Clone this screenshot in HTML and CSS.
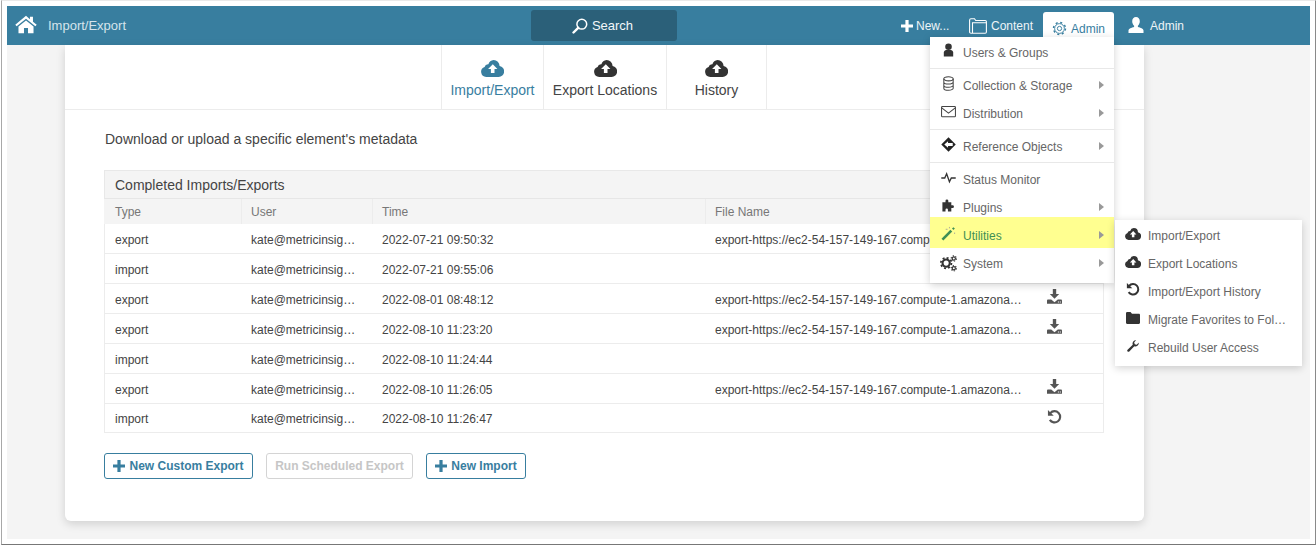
FILE: index.html
```html
<!DOCTYPE html>
<html lang="en">
<head>
<meta charset="utf-8">
<title>Import/Export</title>
<link rel="stylesheet" href="styles.css">
</head>
<body>
<svg class="defs" width="0" height="0" aria-hidden="true">
  <defs>
    <symbol id="cloud" viewBox="0 0 23 17">
      <path fill="currentColor" d="M5.2 17A5.2 5.2 0 0 1 3.6 6.9 3.6 3.6 0 0 1 7.4 4.2 6 6 0 0 1 12.6 0a6 6 0 0 1 6 5.900A5.600 5.600 0 0 1 17.600 17z"/>
      <path fill="#fff" d="M11.800 4.200l4.600 4.900h-2.900V13H9.900v-3.900H7.100z"/>
    </symbol>
    <symbol id="download" viewBox="0 0 16 16">
      <path fill="currentColor" d="M6.200 0h3.600v5.400H13L8 10.400 3 5.400h3.200z"/>
      <path fill="currentColor" fill-rule="evenodd" d="M0 15.800V12.400c0-.7.5-1.200 1.200-1.200H4.500L8 14l3.500-2.800h3.300c.7 0 1.200.5 1.200 1.200v3.400zM11.600 13.200v1.200h1.200v-1.200zM13.600 13.200v1.200h1.200v-1.200z"/>
    </symbol>
    <symbol id="undo" viewBox="0 0 16 16">
      <path fill="none" stroke="currentColor" stroke-width="2.300" d="M3.500 4.400A6 6 0 1 1 3 11.600"/>
      <path fill="currentColor" d="M1 1l6.200 6.200H1z"/>
    </symbol>
    <symbol id="plus" viewBox="0 0 12 12">
      <path fill="currentColor" d="M4.400 0h3.200v4.400H12v3.200H7.600V12H4.400V7.600H0V4.400h4.400z"/>
    </symbol>
  </defs>
</svg>
<div class="frame">
  <div class="app">
    <header class="nav">
      <div class="nav-left">
        <svg class="i-home" viewBox="0 0 24 20"><path fill="#fff" d="M12 .5L.3 10.300l1.500 1.700L12 3.700 22.200 12l1.500-1.700L19.600 7V1.500h-3.300v2.700z"/><path fill="#fff" d="M12 5.600L3.800 12.300V19.500h6V13.900h4.400V19.500h6V12.300z"/></svg>
        <span class="nav-title">Import/Export</span>
      </div>
      <button class="search" type="button">
        <svg class="i-search" viewBox="0 0 16 16"><circle cx="9.800" cy="6.200" r="4.900" fill="none" stroke="#fff" stroke-width="1.500"/><path d="M6.200 9.800L1.500 14.500" stroke="#fff" stroke-width="2.400" stroke-linecap="round"/></svg>
        <span>Search</span>
      </button>
      <nav class="nav-right">
        <a class="nav-item new"><svg class="i-plus"><use href="#plus"/></svg>New...</a>
        <a class="nav-item content"><svg class="i-folder-o" viewBox="0 0 18 16"><path fill="none" stroke="#fff" stroke-width="1.100" d="M.6 14V2.200C.6 1.300 1.200.8 2 .8h3.500l1.200 1.700h9.500c.7 0 1.200.5 1.200 1.200V14c0 .7-.5 1.200-1.200 1.200H2c-.8 0-1.400-.5-1.400-1.200zM3.500 15V4.800h14"/></svg>Content</a>
        <a class="nav-item admin-tab"><svg class="i-gear" viewBox="0 0 16 16"><circle cx="8" cy="8" r="5.200" fill="none" stroke="currentColor" stroke-width="1"/><circle cx="8" cy="8" r="6.400" fill="none" stroke="currentColor" stroke-width="1.500" stroke-dasharray="2.200 2.830"/><circle cx="8" cy="8" r="2.300" fill="none" stroke="currentColor" stroke-width="1"/></svg>Admin</a>
        <a class="nav-item user"><svg class="i-user" viewBox="0 0 16 16"><path fill="#fff" d="M8 0c2.300 0 3.800 1.800 3.800 4.200 0 1.900-.9 3.600-1.900 4.500v1.200c2.500.8 5.600 1.500 5.600 3.700V16H.5v-2.400c0-2.200 3.100-2.900 5.600-3.700V8.700C5.100 7.800 4.200 6.100 4.200 4.200 4.200 1.800 5.700 0 8 0z"/></svg>Admin</a>
      </nav>
    </header>

    <main class="card">
      <div class="tabs">
        <a class="tab tab-active"><svg class="i-cloud-lg"><use href="#cloud"/></svg><span>Import/Export</span></a>
        <a class="tab tab-locations"><svg class="i-cloud-lg"><use href="#cloud"/></svg><span>Export Locations</span></a>
        <a class="tab tab-history"><svg class="i-cloud-lg"><use href="#cloud"/></svg><span>History</span></a>
      </div>
      <div class="body">
        <p class="lead">Download or upload a specific element's metadata</p>
        <section class="panel">
          <h2 class="panel-title">Completed Imports/Exports</h2>
          <table class="grid">
            <thead>
              <tr><th class="c-type">Type</th><th class="c-user">User</th><th class="c-time">Time</th><th class="c-file">File Name</th><th class="c-act"></th></tr>
            </thead>
            <tbody>
              <tr><td>export</td><td>kate@metricinsights.com</td><td>2022-07-21 09:50:32</td><td>export-https://ec2-54-157-149-167.compute-1.amazonaws.com-2022.xml</td><td class="act"><svg class="i-act"><use href="#download"/></svg></td></tr>
              <tr><td>import</td><td>kate@metricinsights.com</td><td>2022-07-21 09:55:06</td><td></td><td class="act"></td></tr>
              <tr><td>export</td><td>kate@metricinsights.com</td><td>2022-08-01 08:48:12</td><td>export-https://ec2-54-157-149-167.compute-1.amazonaws.com-2022.xml</td><td class="act"><svg class="i-act"><use href="#download"/></svg></td></tr>
              <tr><td>export</td><td>kate@metricinsights.com</td><td>2022-08-10 11:23:20</td><td>export-https://ec2-54-157-149-167.compute-1.amazonaws.com-2022.xml</td><td class="act"><svg class="i-act"><use href="#download"/></svg></td></tr>
              <tr><td>import</td><td>kate@metricinsights.com</td><td>2022-08-10 11:24:44</td><td></td><td class="act"></td></tr>
              <tr><td>export</td><td>kate@metricinsights.com</td><td>2022-08-10 11:26:05</td><td>export-https://ec2-54-157-149-167.compute-1.amazonaws.com-2022.xml</td><td class="act"><svg class="i-act"><use href="#download"/></svg></td></tr>
              <tr class="row-last"><td>import</td><td>kate@metricinsights.com</td><td>2022-08-10 11:26:47</td><td></td><td class="act"><svg class="i-act"><use href="#undo"/></svg></td></tr>
            </tbody>
          </table>
        </section>
        <div class="actions">
          <button class="btn btn-custom" type="button"><svg class="i-btn"><use href="#plus"/></svg>New Custom Export</button>
          <button class="btn btn-off" type="button">Run Scheduled Export</button>
          <button class="btn btn-import" type="button"><svg class="i-btn"><use href="#plus"/></svg>New Import</button>
        </div>
      </div>
    </main>

    <div class="menu">
      <a class="mi"><svg class="mi-ic" viewBox="0 0 16 16"><circle cx="8" cy="4" r="3.500" fill="#333"/><path fill="#333" d="M3 14.500V10c0-1.500 1.500-2.500 2.500-2.500h5c1 0 2.500 1 2.500 2.500v4.500z"/></svg>Users &amp; Groups</a>
      <div class="sep"></div>
      <a class="mi"><svg class="mi-ic" viewBox="0 0 16 16"><g fill="none" stroke="#444" stroke-width="1.100"><ellipse cx="8" cy="3" rx="5" ry="2.200"/><path d="M3 3v10c0 1.200 2.200 2.200 5 2.200s5-1 5-2.200V3M3 6.400c0 1.200 2.200 2.200 5 2.200s5-1 5-2.200M3 9.800c0 1.200 2.200 2.200 5 2.200s5-1 5-2.200"/></g></svg>Collection &amp; Storage<i class="caret"></i></a>
      <a class="mi"><svg class="mi-ic" viewBox="0 0 16 14"><g fill="none" stroke="#444" stroke-width="1.100"><rect x=".6" y="1.600" width="14.800" height="11" rx=".8"/><path d="M.8 3.200L8 8.800l7.200-5.600"/></g></svg>Distribution<i class="caret"></i></a>
      <div class="sep"></div>
      <a class="mi"><svg class="mi-ic" viewBox="0 0 16 16"><path fill="#222" d="M8 .3L15.700 8 8 15.700.3 8z"/><path fill="#fff" d="M8.500 4.500L12.500 8l-4 3.500V9.500H3.500v-3h5z" transform="matrix(-1 0 0 1 16 0)"/></svg>Reference Objects<i class="caret"></i></a>
      <div class="sep"></div>
      <a class="mi"><svg class="mi-ic" viewBox="0 0 16 16"><path fill="none" stroke="#333" stroke-width="1.400" d="M.3 8.500H4l2-4.500 3 8.500 2-4h4.700"/></svg>Status Monitor</a>
      <a class="mi"><svg class="mi-ic" viewBox="0 0 16 16"><path fill="#333" d="M1.500 4.500h3.300V3a1.500 1.500 0 0 1 3 0v1.500h3.200v3.200h1.300a1.500 1.500 0 0 1 0 3h-1.300v3.800H7.400v-2a1.300 1.300 0 0 0-2.600 0v2H1.500z"/></svg>Plugins<i class="caret"></i></a>
      <a class="mi mi-hl"><svg class="mi-ic" viewBox="0 0 16 16"><path d="M1.500 14.500L11 5" stroke="#3f8f55" stroke-width="2.800"/><path d="M12.500 3.500l1.500-1.500" stroke="#3f8f55" stroke-width="2.200"/><path d="M5 3.500h2M9 1v1.500M14.500 7v1.500" stroke="#aa9" stroke-width="1"/></svg>Utilities<i class="caret"></i></a>
      <a class="mi"><svg class="mi-ic mi-ic-gears" viewBox="0 0 16 16"><circle cx="5.800" cy="7.600" r="3.400" fill="none" stroke="#333" stroke-width="2"/><circle cx="5.800" cy="7.600" r="5" fill="none" stroke="#333" stroke-width="1.600" stroke-dasharray="1.900 2"/><circle cx="13" cy="3.300" r="1.500" fill="none" stroke="#333" stroke-width="1.100"/><circle cx="13" cy="3.300" r="2.500" fill="none" stroke="#333" stroke-width="1" stroke-dasharray="1.200 1.400"/><circle cx="13" cy="12.500" r="1.500" fill="none" stroke="#333" stroke-width="1.100"/><circle cx="13" cy="12.500" r="2.500" fill="none" stroke="#333" stroke-width="1" stroke-dasharray="1.200 1.400"/></svg>System<i class="caret"></i></a>
    </div>

    <div class="submenu">
      <a class="si"><svg class="si-ic"><use href="#cloud"/></svg>Import/Export</a>
      <a class="si"><svg class="si-ic"><use href="#cloud"/></svg>Export Locations</a>
      <a class="si"><svg class="si-ic si-undo"><use href="#undo"/></svg>Import/Export History</a>
      <a class="si"><svg class="si-ic" viewBox="0 0 14 12"><path fill="#333" d="M0 10.800V1.300C0 .6.500 0 1.200 0h3.300L6 1.800h6.800c.7 0 1.200.5 1.200 1.200v7.800c0 .7-.5 1.200-1.200 1.200H1.200C.5 12 0 11.500 0 10.800z"/></svg><span class="si-text">Migrate Favorites to Folders and Subfolders</span></a>
      <a class="si"><svg class="si-ic" viewBox="0 0 14 14"><path fill="#333" d="M13.800 3.300a4 4 0 0 1-5.300 3.900L2.700 13.300a1.300 1.300 0 0 1-2-2l6-5.800A4 4 0 0 1 10.700.2L8.400 2.600l.6 2.300 2.300.6 2.300-2.300z"/></svg>Rebuild User Access</a>
    </div>
  </div>
</div>
</body>
</html>
```

FILE: styles.css
```css
* { box-sizing: border-box; }
html, body { margin: 0; padding: 0; background: #fff; height: 547px; overflow: hidden; }
body { font-family: "Liberation Sans", Arial, sans-serif; font-size: 12px; color: #444; }
.defs { position: absolute; }
a { color: inherit; text-decoration: none; }

.frame {
  height: 545px;
  margin: 0 0 2px 1px;
  padding: 5px 5px 4px;
  border-top: 1px solid #e9e9e9;
  border-left: 1px solid #a8a8a8;
  border-right: 1px solid #8a8a8a;
  border-bottom: 1px solid #777;
}
.app { position: relative; height: 533px; background: #f4f4f4; overflow: hidden; }

/* top bar */
.nav { display: flex; align-items: center; height: 39px; background: #387e9f; color: #fff; }
.nav-left { display: flex; align-items: center; width: 524px; padding-left: 8px; }
.i-home { width: 22px; height: 19px; margin-top: -3px; }
.nav-title { margin-left: 11px; font-size: 13px; color: #d5e4ec; margin-top: -1px; }
.search {
  display: flex; align-items: center; justify-content: center; gap: 4px;
  width: 146px; height: 31px; padding: 0 3px 0 0;
  border: 0; border-radius: 3px; background: #2b6079; color: #f2f7fa;
  font: 13px "Liberation Sans", Arial, sans-serif;
}
.i-search { width: 16px; height: 16px; }
.nav-right { display: flex; align-items: flex-end; height: 39px; margin-left: 224px; font-size: 12px; }
.nav-item { display: flex; align-items: center; height: 39px; color: #edf4f7; }
.i-plus { width: 12px; height: 12px; margin-right: 3px; color: #fff; }
.new { width: 68px; }
.i-folder-o { width: 18px; height: 16px; margin-right: 4px; }
.content { width: 74px; }
.admin-tab {
  width: 71px; height: 33px; padding-left: 10px; margin-bottom: 0;
  background: #fff; color: #387e9f; border-radius: 3px 3px 0 0;
}
.i-gear { width: 15px; height: 15px; margin-right: 4px; margin-left: -1px; }
.user { margin-left: 14px; }
.i-user { width: 16px; height: 16px; margin-right: 6px; margin-top: -2px; }

/* card */
.card {
  width: 1079px; height: 476px; margin-left: 58px;
  background: #fff; border-radius: 0 0 6px 6px;
  box-shadow: 0 3px 10px rgba(0, 0, 0, .15);
}
.tabs { display: flex; height: 65px; padding-left: 376px; border-bottom: 1px solid #ececec; }
.tab {
  display: flex; flex-direction: column; align-items: center;
  padding-top: 15px; border-left: 1px solid #ececec;
  font-size: 14px; color: #444;
}
.tab .i-cloud-lg { width: 23px; height: 17px; color: #333; margin-bottom: 5px; }
.tab-active { width: 102px; color: #387e9f; }
.tab-active .i-cloud-lg { color: #387e9f; }
.tab-locations { width: 123px; }
.tab-history { width: 101px; border-right: 1px solid #ececec; }

.body { padding: 0 40px 0 39px; }
.lead { margin: 0; padding: 21px 0 0 1px; height: 60px; font-size: 14px; line-height: 16px; color: #444; }

.panel { width: 1000px; }
.panel-title {
  margin: 0; height: 29px; padding: 0 10px;
  font-size: 14px; font-weight: 400; line-height: 28px; color: #444;
  background: #f4f4f4; border: 1px solid #e8e8e8; border-bottom: 1px solid #e6e6e6;
}
.grid { width: 1000px; table-layout: fixed; border-collapse: separate; border-spacing: 0; font-size: 12px; }
.grid th {
  height: 25px; padding: 0 9px; text-align: left; font-weight: 400; color: #777;
  background: #f4f4f4; border-right: 1px solid #ececec;
}
.grid th:first-child { padding-left: 11px; }
.grid th.c-file { padding-left: 9px; }
.grid td {
  height: 30px; padding: 2px 15px 0 9px; white-space: nowrap; overflow: hidden; text-overflow: ellipsis;
  color: #444; border-bottom: 1px solid #ececec;
}
.grid tbody tr td:first-child { border-left: 1px solid #ececec; padding-left: 10px; }
.grid tbody tr td:last-child { border-right: 1px solid #ececec; }
.grid .row-last td { height: 29px; }
.c-type { width: 138px; }
.c-user { width: 131px; }
.c-time { width: 333px; }
.c-file { width: 335px; }
.grid td.act { padding: 0 0 0 6px; color: #555; }
.i-act { display: block; width: 15px; height: 15px; margin-top: -4px; }

.actions { display: flex; gap: 13px; margin-top: 20px; }
.btn {
  display: flex; align-items: center; justify-content: center; height: 26px; padding: 0;
  background: #fff; border: 1px solid #387e9f; border-radius: 3px; color: #387e9f;
  font: 700 12px "Liberation Sans", Arial, sans-serif;
}
.i-btn { width: 12px; height: 12px; margin-right: 4px; }
.btn-custom { width: 149px; }
.btn-off { width: 147px; border-color: #d4d4d4; color: #c6c6c6; }
.btn-import { width: 100px; }

/* menus */
.menu, .submenu {
  position: absolute; background: #fff; font-size: 12px; color: #666;
  box-shadow: 0 2px 8px rgba(0, 0, 0, .18);
}
.menu { left: 923px; top: 31px; width: 184px; height: 246px; padding-top: 1px; }
.mi { position: relative; display: flex; align-items: center; height: 28px; padding: 2px 0 0 33px; }
.mi-ic { position: absolute; left: 11px; top: 5px; width: 15px; height: 15px; }
.mi-ic-gears { left: 10px; top: 6px; width: 17px; height: 17px; }
.sep { height: 1px; margin: 2px 0; background: #e8e8e8; }
.caret {
  position: absolute; right: 10px; top: 10px; width: 0; height: 0;
  border-left: 5px solid #999; border-top: 4.500px solid transparent; border-bottom: 4.500px solid transparent;
}
.mi-hl {
  color: #3f8f55;
  background: linear-gradient(#ffff90 27px, transparent 27px);
  box-shadow: 0 -4px 0 #ffff90;
}
.submenu { left: 1108px; top: 214px; width: 187px; height: 146px; padding: 1px 0 0; }
.si { position: relative; display: flex; align-items: center; height: 28px; padding: 2px 0 0 33px; }
.si-ic { position: absolute; left: 10px; top: 7px; width: 16px; height: 12px; color: #333; }
.si-undo { left: 11px; top: 5px; width: 14px; height: 14px; }
.si-text { width: 139px; overflow: hidden; white-space: nowrap; text-overflow: ellipsis; }
```
